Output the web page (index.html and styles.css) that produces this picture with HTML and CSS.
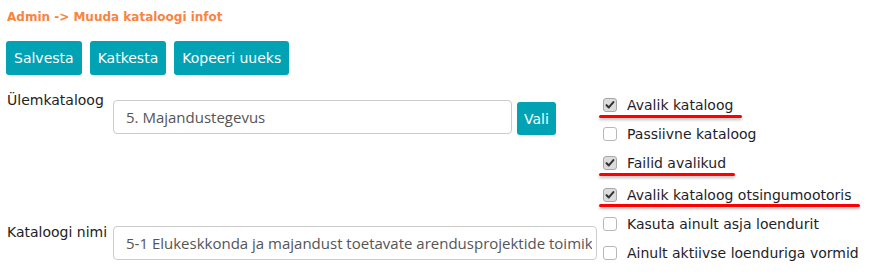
FILE: index.html
```html
<!DOCTYPE html>
<html>
<head>
<meta charset="utf-8">
<link rel="stylesheet" href="styles.css">
</head>
<body>
<div class="page">
  <div class="crumb">Admin -&gt; Muuda kataloogi infot</div>
  <div class="toolbar">
    <button class="btn">Salvesta</button>
    <button class="btn">Katkesta</button>
    <button class="btn">Kopeeri uueks</button>
  </div>
  <div class="main">
    <div class="form">
      <div class="row row-parent">
        <label class="lbl">Ülemkataloog</label>
        <div class="field">
          <input class="inp inp-parent" type="text" value="5. Majandustegevus">
          <button class="btn btn-small">Vali</button>
        </div>
      </div>
      <div class="row row-name">
        <label class="lbl lbl-name">Kataloogi nimi</label>
        <div class="field">
          <input class="inp inp-name" type="text" value="5-1 Elukeskkonda ja majandust toetavate arendusprojektide toimikud">
        </div>
      </div>
    </div>
    <div class="checks">
      <div class="chk marked"><span class="box on"><svg viewBox="0 0 14 14" width="14" height="14"><path d="M3 7.2 L5.6 9.8 L11 3.6" fill="none" stroke="#333" stroke-width="2.4" stroke-linecap="round" stroke-linejoin="round"/></svg></span><span class="txt">Avalik kataloog</span></div>
      <div class="chk"><span class="box"></span><span class="txt">Passiivne kataloog</span></div>
      <div class="chk marked"><span class="box on"><svg viewBox="0 0 14 14" width="14" height="14"><path d="M3 7.2 L5.6 9.8 L11 3.6" fill="none" stroke="#333" stroke-width="2.4" stroke-linecap="round" stroke-linejoin="round"/></svg></span><span class="txt">Failid avalikud</span></div>
      <div class="chk marked gap"><span class="box on"><svg viewBox="0 0 14 14" width="14" height="14"><path d="M3 7.2 L5.6 9.8 L11 3.6" fill="none" stroke="#333" stroke-width="2.4" stroke-linecap="round" stroke-linejoin="round"/></svg></span><span class="txt">Avalik kataloog otsingumootoris</span></div>
      <div class="chk"><span class="box"></span><span class="txt">Kasuta ainult asja loendurit</span></div>
      <div class="chk"><span class="box"></span><span class="txt">Ainult aktiivse loenduriga vormid</span></div>
    </div>
  </div>
</div>
</body>
</html>
```
FILE: styles.css
```css
html, body {
  margin: 0;
  padding: 0;
  background: #fff;
}
body {
  font-family: "DejaVu Sans", Verdana, sans-serif;
  color: #222;
  font-size: 13px;
}
.page {
  padding: 9px 6px 0 6px;
}
.crumb {
  font-weight: bold;
  font-size: 12px;
  color: #f7843f;
  padding-left: 1px;
  height: 16px;
  line-height: 16px;
}
.toolbar {
  display: flex;
  gap: 8px;
  margin-top: 16px;
}
.btn {
  background: #00a2b4;
  color: #fff;
  border: none;
  border-radius: 3px;
  font-family: "DejaVu Sans", Verdana, sans-serif;
  font-size: 14px;
  height: 34px;
  padding: 0 8px;
  cursor: pointer;
}
.main {
  display: flex;
  margin-top: 15px;
}
.form {
  width: 597px;
  flex: none;
}
.row {
  display: flex;
  padding-left: 1px;
}
.lbl {
  width: 106px;
  flex: none;
  font-size: 14px;
  line-height: 18px;
}
.row-parent .lbl {
  margin-top: 1px;
}
.row-parent .field {
  margin-top: 10px;
}
.field {
  display: flex;
  align-items: flex-start;
  gap: 5px;
}
.inp {
  box-sizing: border-box;
  height: 34px;
  border: 1px solid #ccc;
  border-radius: 4px;
  padding: 0 12px;
  font-family: "Open Sans", sans-serif;
  font-size: 15px;
  color: #555;
  background: #fff;
  outline: none;
}
.inp-parent {
  width: 399px;
}
.btn-small {
  height: 33px;
  margin-top: 2px;
  padding: 0 7px;
  font-size: 14px;
}
.row-name {
  margin-top: 91px;
  align-items: flex-start;
}
.row-name .lbl {
  margin-top: -3px;
}
.inp-name {
  width: 484px;
  padding-right: 4px;
}
.checks {
  display: flex;
  flex-direction: column;
  align-items: flex-start;
  margin-top: 0;
}
.chk {
  position: relative;
  height: 29px;
  display: flex;
  align-items: center;
}
.chk.gap {
  margin-top: 3px;
}
.box {
  box-sizing: border-box;
  width: 14px;
  height: 14px;
  border: 1px solid #b8b8b8;
  border-radius: 3px;
  background: #fff;
  flex: none;
  display: flex;
  align-items: center;
  justify-content: center;
}
.box.on {
  background: #dcdcdc;
  border-color: #a8a8a8;
}
.box svg {
  display: block;
}
.txt {
  margin-left: 10px;
  font-size: 14px;
  color: #1e1e2a;
}
.chk.marked::after {
  content: "";
  position: absolute;
  left: -4px;
  right: -9px;
  top: 25px;
  height: 3px;
  background: #f00;
  border-radius: 2px;
  box-shadow: 0 2px 3px rgba(0,0,0,0.25);
}
.chk.marked.gap::after {
  top: 24px;
}
```
